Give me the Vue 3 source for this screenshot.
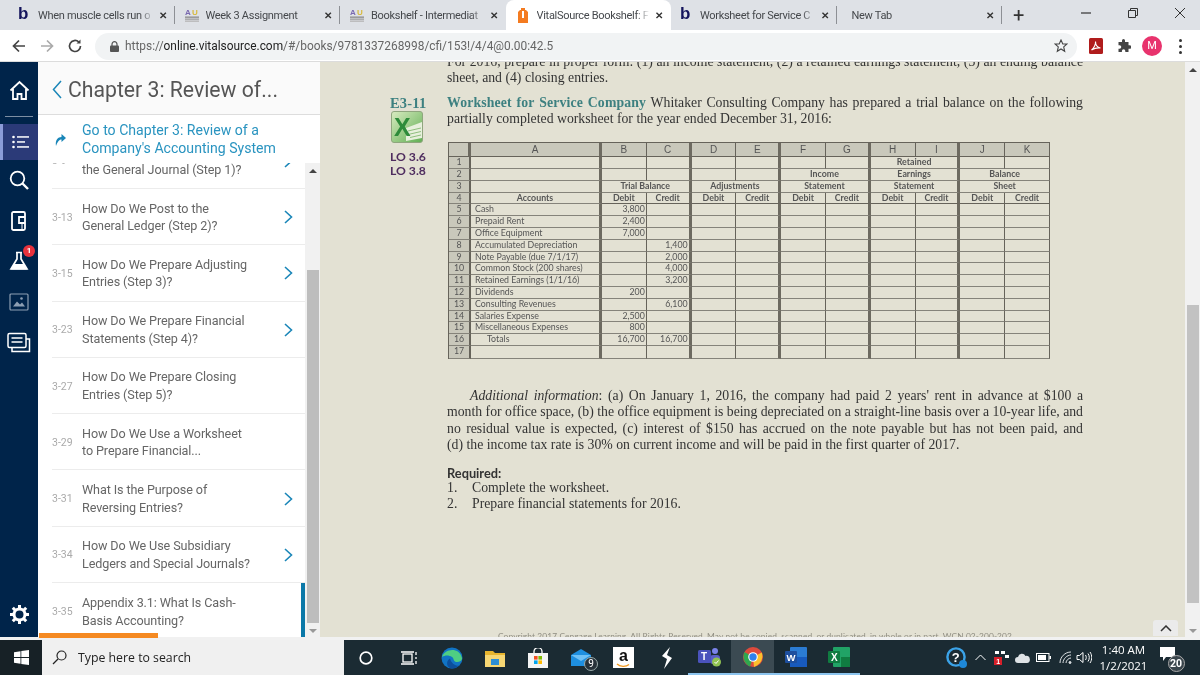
<template>
  <div class="page">
    <!-- browser tabs -->
    <div class="tabs">
      <div v-for="tab in tabs" :key="tab.title" class="tab" :class="{ active: tab.active, sep: tab.sep }">
        <span v-if="tab.icon === 'b'" class="fav-b">b</span>
        <svg v-else-if="tab.icon === 'au'" class="fav" viewBox="0 0 16 16">
          <text x="1" y="8" font-size="8" font-weight="700" font-family="Liberation Sans" fill="#7a6ab0">A</text>
          <text x="8" y="8" font-size="8" font-weight="700" font-family="Liberation Sans" fill="#d8b93c">U</text>
          <rect x="1" y="9.5" width="14" height="1.3" fill="#8a8a8a" />
          <rect x="1" y="11.5" width="14" height="1.3" fill="#a0a0a0" />
          <rect x="1" y="13.5" width="14" height="1.3" fill="#b5b5b5" />
        </svg>
        <svg v-else-if="tab.icon === 'vs'" class="fav" viewBox="0 0 16 16">
          <path d="M3 5l2-2h1V1h4v2h1l2 2v11H3z" fill="#f47b20" />
          <path d="M7 4h2v7H7z" fill="#fff" />
        </svg>
        <span class="tab-title">{{ tab.title }}</span>
        <span class="tab-x">✕</span>
      </div>
      <span class="tab-plus">+</span>
      <div class="win-ctrl">
        <svg width="12" height="12" viewBox="0 0 12 12"><path d="M1 6h10" stroke="#333" stroke-width="1.2" /></svg>
        <svg width="12" height="12" viewBox="0 0 12 12" fill="none" stroke="#333"><path d="M1.5 3.5h7v7h-7zM3.5 3.5v-2h7v7h-2" /></svg>
        <svg width="12" height="12" viewBox="0 0 12 12"><path d="M1 1l10 10M11 1L1 11" stroke="#333" /></svg>
      </div>
    </div>

    <!-- address bar -->
    <div class="toolbar">
      <svg class="nav-btn" width="16" height="16" viewBox="0 0 16 16" fill="none" stroke="#444" stroke-width="1.7"><path d="M14 8H2.5M8 2.5L2.5 8 8 13.5" /></svg>
      <svg class="nav-btn" width="16" height="16" viewBox="0 0 16 16" fill="none" stroke="#aaa" stroke-width="1.7"><path d="M2 8h11.5M8 2.5L13.5 8 8 13.5" /></svg>
      <svg class="nav-btn" width="16" height="16" viewBox="0 0 16 16" fill="none" stroke="#444" stroke-width="1.7"><path d="M13.5 8a5.5 5.5 0 1 1-1.7-4" /><path d="M13.5 1.5v4h-4" fill="#444" stroke="none" /></svg>
      <div class="omnibox">
        <svg width="9" height="11" viewBox="0 0 9 11"><path d="M2 5V3.2a2.5 2.5 0 0 1 5 0V5" fill="none" stroke="#555" stroke-width="1.2" /><rect y="4.5" width="9" height="6.5" rx="1" fill="#555" /></svg>
        <span class="url">https://<b>online.vitalsource.com</b>/#/books/9781337268998/cfi/153!/4/4@0.00:42.5</span>
        <svg class="star" width="14" height="14" viewBox="0 0 14 14"><path d="M7 1l1.8 4h4.2l-3.3 2.9 1 4.4L7 10l-3.700 2.300 1-4.400L1 5h4.200z" fill="none" stroke="#444" stroke-width="1.100" /></svg>
      </div>
      <div class="ext">
        <svg width="14" height="16" viewBox="0 0 14 16"><rect width="14" height="16" rx="1.500" fill="#b01c1c" /><path d="M2.500 12C5 10 7 6 6.500 3.500 6.500 7 8.500 9.500 11.500 10 8 9.500 5 10.500 2.500 12z" fill="none" stroke="#fff" stroke-width="1.100" /></svg>
        <svg width="14" height="14" viewBox="0 0 14 14"><path d="M5 1.500a1.500 1.500 0 0 1 3 0V3h3.500v3.200h1a1.700 1.700 0 0 1 0 3.600h-1V13H8.300v-1a1.700 1.700 0 0 0-3.400 0v1H1.500V9.800h1a1.700 1.700 0 0 0 0-3.600h-1V3H5z" fill="#444" /></svg>
        <span class="avatar">M</span>
        <span class="dots"><i></i><i></i><i></i></span>
      </div>
    </div>

    <div class="main">
      <!-- icon rail -->
      <aside class="rail">
        <svg class="rail-home" width="21" height="21" viewBox="0 0 21 21" fill="none" stroke="#fff" stroke-width="1.800"><path d="M1.500 10.500L10.500 2l9 8.500M4 9v10h4.500v-5h4v5H17V9" /></svg>
        <div class="rail-line"></div>
        <div class="rail-item on">
          <svg width="18" height="14" viewBox="0 0 18 14" fill="#fff"><circle cx="1.500" cy="2" r="1.300" /><circle cx="1.500" cy="7" r="1.300" /><circle cx="1.500" cy="12" r="1.300" /><rect x="5" y="1.200" width="12" height="1.500" /><rect x="5" y="6.200" width="8" height="1.500" /><rect x="5" y="11.200" width="12" height="1.500" /></svg>
        </div>
        <div class="rail-item">
          <svg width="20" height="20" viewBox="0 0 20 20" fill="none" stroke="#fff" stroke-width="1.800"><circle cx="8.500" cy="8.500" r="6.800" /><path d="M13.500 13.500L19 19" stroke-width="2.400" /></svg>
        </div>
        <div class="rail-item">
          <svg width="16" height="20" viewBox="0 0 16 20" fill="none" stroke="#fff" stroke-width="1.800"><rect x="1" y="1" width="13" height="18" rx="1.500" /><path d="M14 6H8v6h6" /><path d="M11 12v7" stroke-width="1" /></svg>
        </div>
        <div class="rail-item flask">
          <svg width="20" height="20" viewBox="0 0 20 20"><path d="M7 1.500h6M8 2v6L2 18h16l-6-10V2" fill="none" stroke="#fff" stroke-width="1.700" /><path d="M5 13h10l3 5.500H2z" fill="#fff" /></svg>
          <span class="badge">1</span>
        </div>
        <div class="rail-item">
          <svg width="20" height="18" viewBox="0 0 20 18" fill="none" stroke="#8d9fb3" stroke-width="1.200"><rect x="1" y="1" width="18" height="16" rx="1" /><path d="M4 13.500l4-5 3 3 2-2 3 4z" fill="#8d9fb3" stroke="none" /><circle cx="12.500" cy="5.500" r="1.300" fill="#8d9fb3" stroke="none" /></svg>
        </div>
        <div class="rail-item">
          <svg width="24" height="21" viewBox="0 0 24 21" fill="none" stroke="#fff" stroke-width="1.500"><path d="M5 15v4.500h17.500V7H19" /><rect x="1" y="1.500" width="18" height="14" rx="1.500" fill="#00244a" /><path d="M4.500 6h11M4.500 10h11" /></svg>
        </div>
        <svg class="rail-gear" width="21" height="21" viewBox="0 0 21 21"><circle cx="10.500" cy="10.500" r="5.500" fill="none" stroke="#fff" stroke-width="3" /><path d="M10.500 1v4M10.500 16v4M1 10.500h4M16 10.500h4M3.800 3.800l2.800 2.800M14.400 14.400l2.800 2.800M17.200 3.800l-2.800 2.800M6.600 14.400l-2.800 2.800" stroke="#fff" stroke-width="3" /></svg>
      </aside>

      <!-- chapter navigation -->
      <section class="nav">
        <header class="nav-head">
          <svg width="10" height="19" viewBox="0 0 10 19" fill="none" stroke="#1a86b8" stroke-width="1.500"><path d="M9 1L1.500 9.500 9 18" /></svg>
          <span>Chapter 3: Review of...</span>
        </header>
        <div class="goto">
          <svg width="11" height="13" viewBox="0 0 11 13"><path d="M1 13C0 7 3 4 6.500 4V1L11 5 6.500 9V6.500C4 6.500 2.500 9 1 13z" fill="#1a86b8" /></svg>
          <span>Go to Chapter 3: Review of a Company's Accounting System</span>
        </div>
        <div class="nav-body">
          <div class="nav-list">
            <div v-for="item in sections" :key="item.page" class="row" :class="{ current: item.current }">
              <span class="row-page">{{ item.page }}</span>
              <span class="row-title">
                <span v-for="line in item.lines" :key="line" class="line">{{ line }}</span>
              </span>
              <svg v-if="item.more" width="9" height="14" viewBox="0 0 9 14" fill="none" stroke="#1a86b8" stroke-width="1.600"><path d="M1 1l6.500 6L1 13" /></svg>
            </div>
          </div>
          <div class="nav-scroll">
            <span class="arrow up"></span>
            <div class="nav-thumb"></div>
            <span class="arrow down"></span>
          </div>
        </div>
        <div class="progress"></div>
      </section>

      <!-- book page -->
      <section class="book">
        <div class="book-page">
          <div class="clip-top">
            <p class="just">For 2016, prepare in proper form: (1) an income statement, (2) a retained earnings statement, (3) an ending balance</p>
            <p>sheet, and (4) closing entries.</p>
          </div>
          <div class="exercise">
            <div class="labels">
              <div class="ex-no">E3-11</div>
              <svg class="xl" width="32" height="32" viewBox="0 0 32 32">
                <defs><linearGradient id="xlg" x1="0" y1="0" x2="1" y2="1"><stop offset="0" stop-color="#d8ebc0" /><stop offset="1" stop-color="#5fae52" /></linearGradient></defs>
                <rect x=".5" y=".5" width="31" height="31" rx="2.500" fill="url(#xlg)" stroke="#8fa67e" />
                <path d="M15 17l16-6v16l-16 3z" fill="#e7f0dc" />
                <path d="M17 20l13-3M17 23.500l13-3M19 26.500l11-2.500" stroke="#8fbf7e" />
                <text x="3" y="25" font-size="25" font-weight="700" font-family="Liberation Sans" fill="#2e8b3a">X</text>
              </svg>
              <div class="lo">LO 3.6<br />LO 3.8</div>
            </div>
            <div class="ex-body">
              <p class="just"><b class="ex-title">Worksheet for Service Company</b> Whitaker Consulting Company has prepared a trial balance on the following</p>
              <p>partially completed worksheet for the year ended December 31, 2016:</p>

              <div class="sheet">
                <template v-for="(row, r) in sheetRows" :key="r">
                  <div
                    v-for="(cell, c) in row"
                    :key="c"
                    class="cell"
                    :class="cell.cls"
                    :style="{ gridColumn: 'span ' + cell.span }"
                  >{{ cell.text }}</div>
                </template>
              </div>

              <div class="info">
                <p class="just indent"><i>Additional information</i>: (a) On January 1, 2016, the company had paid 2 years' rent in advance at $100 a</p>
                <p class="just">month for office space, (b) the office equipment is being depreciated on a straight-line basis over a 10-year life, and</p>
                <p class="just">no residual value is expected, (c) interest of $150 has accrued on the note payable but has not been paid, and</p>
                <p>(d) the income tax rate is 30% on current income and will be paid in the first quarter of 2017.</p>
              </div>
              <div class="req-head">Required:</div>
              <div class="req"><span>1.</span>Complete the worksheet.</div>
              <div class="req"><span>2.</span>Prepare financial statements for 2016.</div>
              <div class="copyright">Copyright 2017 Cengage Learning. All Rights Reserved. May not be copied, scanned, or duplicated, in whole or in part. WCN 02-200-202</div>
            </div>
          </div>
          <div class="to-top">
            <svg width="12" height="7" viewBox="0 0 12 7" fill="none" stroke="#333" stroke-width="1.500"><path d="M1 6l5-5 5 5" /></svg>
          </div>
        </div>
        <div class="page-scroll">
          <span class="arrow up"></span>
          <div class="page-thumb"></div>
          <span class="arrow down"></span>
        </div>
      </section>
    </div>
    <div class="strip"></div>

    <!-- windows taskbar -->
    <footer class="taskbar">
      <div class="start">
        <svg width="15" height="15" viewBox="0 0 15 15" fill="#fff"><path d="M0 2.200l6.500-1V7H0zM7.300 1l7.700-1v7H7.300zM0 8h6.500v5.800l-6.500-1zM7.300 8H15v7l-7.700-1.100z" /></svg>
      </div>
      <div class="search">
        <svg width="15" height="15" viewBox="0 0 15 15" fill="none" stroke="#222" stroke-width="1.200"><circle cx="9.500" cy="5.500" r="4.500" /><path d="M6 9l-5 5" /></svg>
        <span>Type here to search</span>
      </div>
      <div class="apps">
        <div class="app">
          <svg width="14" height="14" viewBox="0 0 14 14" fill="none" stroke="#fff" stroke-width="1.700"><circle cx="7" cy="7" r="5.800" /></svg>
        </div>
        <div class="app">
          <svg width="16" height="14" viewBox="0 0 16 14" fill="none" stroke="#fff" stroke-width="1.300"><rect x="2" y="3" width="9" height="8" /><path d="M0 1h13M0 13h13M15 1v3M15 6v2M15 10v3" /></svg>
        </div>
        <div class="app">
          <svg width="22" height="22" viewBox="0 0 22 22">
            <circle cx="11" cy="11" r="10.500" fill="#1174c4" />
            <path d="M1 10C3 2 18 -1 21 11c.5 3-3 4.500-6 4-3-1-2-4-4-5-3-2-7-2-10 0z" fill="#4fce82" />
            <path d="M11 21.500c-5 0-7-7-2-10 1 4 5 8 9 7-2 2-4 3-7 3z" fill="#0c4f9c" />
          </svg>
        </div>
        <div class="app">
          <svg width="20" height="18" viewBox="0 0 20 18"><path d="M0 2h8l2 2h10v14H0z" fill="#e8b52e" /><rect y="6" width="20" height="12" fill="#f7d774" /><rect x="6" y="10" width="8" height="6" fill="#2d8fd5" /></svg>
        </div>
        <div class="app">
          <svg width="20" height="20" viewBox="0 0 20 20"><path d="M6 6V3.500a4 4 0 0 1 8 0V6" fill="none" stroke="#fff" stroke-width="1.300" /><rect y="5" width="20" height="15" fill="#f4f4f4" /><rect x="6" y="8" width="3.600" height="3.600" fill="#f25022" /><rect x="10.400" y="8" width="3.600" height="3.600" fill="#7fba00" /><rect x="6" y="12.400" width="3.600" height="3.600" fill="#00a4ef" /><rect x="10.400" y="12.400" width="3.600" height="3.600" fill="#ffb900" /></svg>
        </div>
        <div class="app">
          <svg width="22" height="20" viewBox="0 0 22 20"><path d="M1 7l10-6 10 6v11H1z" fill="#1e8fe0" /><path d="M1 7l10 6 10-6" fill="#6fc0f5" /></svg>
          <span class="mail-count">9</span>
        </div>
        <div class="app">
          <div class="amazon">a<svg width="15" height="5" viewBox="0 0 15 5" fill="none" stroke="#f29a1f" stroke-width="1.300"><path d="M1 1c3 3 9 3 12 .5" /></svg></div>
        </div>
        <div class="app">
          <svg width="12" height="22" viewBox="0 0 12 22" fill="#fff"><path d="M9 0L1 9l5 3-3 10 8-11-5-3z" /></svg>
        </div>
        <div class="app open">
          <svg width="24" height="20" viewBox="0 0 24 20">
            <circle cx="17" cy="4" r="3" fill="#7b83eb" /><rect x="12" y="8" width="10" height="9" rx="3" fill="#5b5fc7" />
            <rect y="3" width="13" height="13" rx="1.500" fill="#4b53bc" />
            <text x="3" y="13" font-size="10" font-weight="700" font-family="Liberation Sans" fill="#fff">T</text>
            <circle cx="18.500" cy="15" r="4.500" fill="#92c353" /><path d="M16.500 15l1.500 1.500 2.500-3" fill="none" stroke="#fff" />
          </svg>
        </div>
        <div class="app open lit">
          <svg width="20" height="20" viewBox="0 0 20 20">
            <circle cx="10" cy="10" r="10" fill="#de4a3c" />
            <path d="M10 10L1.500 5C-1 10 1 17 7 19.500z" fill="#2fa84f" />
            <path d="M10 10l8.800-4.500C20.500 10 19 17 11 20z" fill="#fbc02d" />
            <circle cx="10" cy="10" r="4.800" fill="#fff" /><circle cx="10" cy="10" r="3.700" fill="#2f80ed" />
          </svg>
        </div>
        <div class="app open">
          <svg width="22" height="20" viewBox="0 0 22 20"><rect x="5" width="17" height="20" rx="1" fill="#2b7cd3" /><rect x="5" y="10" width="17" height="10" fill="#185abd" /><rect y="4" width="12" height="12" rx="1" fill="#1e4f9e" /><text x="1.500" y="13.500" font-size="9.500" font-weight="700" font-family="Liberation Sans" fill="#fff">W</text></svg>
        </div>
        <div class="app open">
          <svg width="22" height="20" viewBox="0 0 22 20"><rect x="5" width="17" height="20" rx="1" fill="#21a366" /><rect x="13" y="10" width="9" height="10" fill="#107c41" /><rect y="4" width="12" height="12" rx="1" fill="#107c41" /><text x="3" y="13.500" font-size="10" font-weight="700" font-family="Liberation Sans" fill="#fff">X</text></svg>
        </div>
      </div>
      <div class="tray">
        <svg class="help" width="21" height="21" viewBox="0 0 21 21"><circle cx="10" cy="10" r="8.600" fill="none" stroke="#3ba3e8" stroke-width="2.400" /><text x="5.800" y="15" font-size="13" font-weight="700" font-family="Liberation Sans" fill="#fff">?</text><circle cx="17" cy="17" r="4" fill="#1e88d8" /></svg>
        <svg class="t-up" width="11" height="7" viewBox="0 0 11 7" fill="none" stroke="#fff"><path d="M.5 6l5-5 5 5" /></svg>
        <svg class="t-net" width="15" height="15" viewBox="0 0 15 15"><rect x="1" y="1" width="4" height="3" fill="#fff" /><rect x="7" y="1" width="4" height="3" fill="#fff" /><rect x="11" y="5" width="4" height="3" fill="#fff" /><rect y="7" width="8" height="8" fill="#d81f2a" /><text x="2.200" y="14" font-size="7" font-weight="700" font-family="Liberation Sans" fill="#fff">1</text></svg>
        <svg class="t-cloud" width="15" height="10" viewBox="0 0 15 10"><path d="M3 10a3 3 0 0 1 0-6 4 4 0 0 1 7.500-1A3.500 3.500 0 0 1 12 10z" fill="#dfe3e6" /></svg>
        <svg class="t-bat" width="15" height="9" viewBox="0 0 15 9"><rect x=".5" y=".5" width="12.500" height="8" fill="none" stroke="#fff" /><rect x="2" y="2" width="8" height="5" fill="#fff" /><rect x="13.500" y="3" width="1.500" height="3" fill="#fff" /></svg>
        <svg class="t-wifi" width="13" height="13" viewBox="0 0 13 13" fill="none" stroke="#dfe3e6"><path d="M1 12C1 6 6 1 12 1M4 12c0-4 4-8 8-8M7 12c0-2.500 2.500-5 5-5" /><circle cx="11" cy="11.500" r="1" fill="#dfe3e6" /></svg>
        <svg class="t-vol" width="16" height="13" viewBox="0 0 16 13" fill="none" stroke="#fff"><path d="M1 4.500h2.500L7 1.500v10l-3.500-3H1zM9.500 4c1 1.500 1 3.500 0 5M12 2.500c1.700 2.500 1.700 5.500 0 8M14 1c2.300 3.300 2.300 7.700 0 11" /></svg>
        <div class="clock"><div>1:40 AM</div><div>1/2/2021</div></div>
        <div class="notif">
          <svg width="15" height="14" viewBox="0 0 15 14"><path d="M0 0h15v10H6l-3 4v-4H0z" fill="#fff" /></svg>
          <span>20</span>
        </div>
      </div>
    </footer>
  </div>
</template>

<script setup>
const tabs = [
  { title: 'When muscle cells run o', icon: 'b', sep: true },
  { title: 'Week 3 Assignment', icon: 'au', sep: true },
  { title: 'Bookshelf - Intermediat', icon: 'au' },
  { title: 'VitalSource Bookshelf: F', icon: 'vs', active: true },
  { title: 'Worksheet for Service C', icon: 'b', sep: true },
  { title: 'New Tab', sep: true }
]

const sections = [
  { page: '3-9', lines: ['', 'the General Journal (Step 1)?'], more: true },
  { page: '3-13', lines: ['How Do We Post to the', 'General Ledger (Step 2)?'], more: true },
  { page: '3-15', lines: ['How Do We Prepare Adjusting', 'Entries (Step 3)?'], more: true },
  { page: '3-23', lines: ['How Do We Prepare Financial', 'Statements (Step 4)?'], more: true },
  { page: '3-27', lines: ['How Do We Prepare Closing', 'Entries (Step 5)?'] },
  { page: '3-29', lines: ['How Do We Use a Worksheet', 'to Prepare Financial...'] },
  { page: '3-31', lines: ['What Is the Purpose of', 'Reversing Entries?'], more: true },
  { page: '3-34', lines: ['How Do We Use Subsidiary', 'Ledgers and Special Journals?'], more: true },
  { page: '3-35', lines: ['Appendix 3.1: What Is Cash-', 'Basis Accounting?'], current: true }
]

const accounts = [
  ['Cash', '3,800', ''],
  ['Prepaid Rent', '2,400', ''],
  ['Office Equipment', '7,000', ''],
  ['Accumulated Depreciation', '', '1,400'],
  ['Note Payable (due 7/1/17)', '', '2,000'],
  ['Common Stock (200 shares)', '', '4,000'],
  ['Retained Earnings (1/1/16)', '', '3,200'],
  ['Dividends', '200', ''],
  ['Consulting Revenues', '', '6,100'],
  ['Salaries Expense', '2,500', ''],
  ['Miscellaneous Expenses', '800', ''],
  ['Totals', '16,700', '16,700'],
  ['', '', '']
]

const cell = (text, span, cls) => ({ text, span, cls })
const thickCols = 'ACEGI'
const blanks = (letters) =>
  letters.split('').map((l) => cell('', 1, thickCols.includes(l) ? 'thick' : ''))
const pair = (text, thick = true) => cell(text, 2, 'head' + (thick ? ' thick' : ''))
const num = (n) => cell(n, 1, 'rownum')

const sheetRows = [
  [cell('', 1, 'letter thick'), ...'ABCDEFGHIJK'.split('').map((l) =>
    cell(l, 1, 'letter' + (thickCols.includes(l) ? ' thick' : '')))],
  [num(1), ...blanks('ABCDEFG'), pair('Retained'), ...blanks('JK')],
  [num(2), ...blanks('ABCDE'), pair('Income'), pair('Earnings'), pair('Balance', false)],
  [num(3), ...blanks('A'), pair('Trial Balance'), pair('Adjustments'), pair('Statement'), pair('Statement'), pair('Sheet', false)],
  [num(4), cell('Accounts', 1, 'head thick'), ...'BCDEFGHIJK'.split('').map((l, i) =>
    cell(i % 2 ? 'Credit' : 'Debit', 1, 'head under' + (thickCols.includes(l) ? ' thick' : '')))],
  ...accounts.map((a, i) => [
    num(i + 5),
    cell(a[0], 1, 'account thick' + (a[0] === 'Totals' ? ' totals' : '')),
    cell(a[1], 1, 'amount'),
    cell(a[2], 1, 'amount thick'),
    ...blanks('DEFGHIJK')
  ])
]
</script>

<style scoped>
.page {
  width: 1200px;
  height: 675px;
  overflow: hidden;
  display: flex;
  flex-direction: column;
  background: #fff;
  font-family: Roboto, "Liberation Sans", sans-serif;
  filter: blur(0.45px);
}

/* tabs */
.tabs {
  height: 30px;
  flex: none;
  display: flex;
  align-items: center;
  padding-left: 9px;
  background: #dee1e6;
  font-size: 11px;
  letter-spacing: -0.3px;
  color: #45484c;
}
.tab {
  width: 165.500px;
  height: 100%;
  flex: none;
  display: flex;
  align-items: center;
  padding: 0 8px 0 9px;
  box-sizing: border-box;
  position: relative;
}
.tab.sep::after {
  content: "";
  position: absolute;
  right: 0;
  top: 6px;
  bottom: 6px;
  width: 1px;
  background: #8d9095;
}
.tab.active {
  background: #fff;
  border-radius: 8px 8px 0 0;
}
.fav-b {
  width: 14px;
  font: 700 17px/1 "Liberation Sans", sans-serif;
  color: #14145c;
  margin-top: -3px;
}
.fav {
  width: 16px;
  height: 16px;
  flex: none;
}
.tab-title {
  flex: 1;
  min-width: 0;
  margin-left: 6px;
  white-space: nowrap;
  overflow: hidden;
  -webkit-mask-image: linear-gradient(90deg, #000 88%, transparent);
  mask-image: linear-gradient(90deg, #000 88%, transparent);
}
.tab-x {
  font-size: 9.500px;
  font-weight: 700;
  color: #333;
  margin-left: 5px;
}
.tab-plus {
  margin-left: 11px;
  font-size: 20px;
  line-height: 1;
  color: #333;
}
.win-ctrl {
  margin-left: auto;
  width: 106px;
  padding-right: 14px;
  display: flex;
  justify-content: space-between;
  margin-top: -4px;
}

/* toolbar */
.toolbar {
  height: 32px;
  flex: none;
  display: flex;
  align-items: center;
  padding-left: 11px;
  background: #fff;
  box-shadow: inset 0 -1px 0 #dcdcdc;
}
.nav-btn {
  margin-right: 12px;
}
.omnibox {
  width: 982px;
  margin-left: 0;
  height: 27px;
  border-radius: 14px;
  background: #f1f3f4;
  display: flex;
  align-items: center;
  padding: 0 9px 0 15px;
  box-sizing: border-box;
}
.url {
  margin-left: 6px;
  font-size: 11.900px;
  color: #666;
  white-space: nowrap;
}
.url b {
  font-weight: 400;
  color: #222;
}
.star {
  margin-left: auto;
}
.ext {
  flex: 1;
  display: flex;
  align-items: center;
  padding-left: 12px;
}
.ext svg + svg {
  margin-left: 14px;
}
.avatar {
  width: 20px;
  height: 20px;
  margin-left: 11px;
  border-radius: 50%;
  background: #e8336d;
  color: #fff;
  font-size: 11px;
  line-height: 20px;
  text-align: center;
}
.dots {
  margin-left: 17px;
  display: flex;
  flex-direction: column;
  gap: 3px;
}
.dots i {
  width: 3px;
  height: 3px;
  border-radius: 50%;
  background: #333;
}

/* layout */
.main {
  height: 575px;
  flex: none;
  display: flex;
}
.strip {
  height: 3px;
  flex: none;
  background: #f1f1f1;
}

/* rail */
.rail {
  width: 38px;
  flex: none;
  display: flex;
  flex-direction: column;
  align-items: center;
  background: #00244a;
  padding-top: 18px;
  box-sizing: border-box;
}
.rail-home {
  flex: none;
}
.rail-line {
  width: 28px;
  height: 1px;
  margin-top: 15px;
  background: #7d8ea3;
}
.rail-item {
  width: 100%;
  height: 40.500px;
  flex: none;
  display: flex;
  align-items: center;
  justify-content: center;
  position: relative;
}
.rail-item.on {
  height: 36px;
  margin-top: 7px;
  background: #2b3a78;
  border-left: 3px solid #8c9bd8;
  box-sizing: border-box;
}
.badge {
  position: absolute;
  top: 4px;
  left: 23px;
  width: 12px;
  height: 12px;
  border-radius: 50%;
  background: #e8323c;
  color: #fff;
  font-size: 8px;
  font-weight: 700;
  line-height: 12px;
  text-align: center;
}
.rail-gear {
  margin-top: auto;
  margin-bottom: 12px;
  flex: none;
}

/* nav */
.nav {
  width: 282px;
  flex: none;
  display: flex;
  flex-direction: column;
  position: relative;
  background: #fff;
}
.nav-head {
  height: 53px;
  flex: none;
  display: flex;
  align-items: center;
  gap: 6px;
  padding: 3px 0 0 14px;
  background: #fafafa;
  border-bottom: 1px solid #ddd;
  box-sizing: border-box;
  font-size: 21.200px;
  color: #555;
}
.goto {
  height: 48px;
  flex: none;
  display: flex;
  align-items: center;
  position: relative;
  z-index: 1;
  background: #fff;
  font-size: 14.100px;
  line-height: 18px;
  color: #2a94c0;
  padding: 0 20px 0 17px;
  gap: 16px;
}
.goto span {
  width: 210px;
}
.nav-body {
  flex: 1;
  min-height: 0;
  display: flex;
}
.nav-list {
  flex: 1;
  overflow: hidden;
}
.row {
  height: 56.300px;
  margin-left: 14px;
  padding-top: 1px;
  display: grid;
  grid-template-columns: 30px 202px 9px;
  align-items: center;
  box-sizing: border-box;
  border-bottom: 1.500px solid #ececec;
}
.row:first-child {
  margin-top: -30.300px;
}
.row:last-child {
  border-bottom: none;
  border-right: 4px solid #0b78a8;
}
.row-page {
  font-size: 10.500px;
  color: #aaa;
}
.row-title {
  font-size: 12.600px;
  letter-spacing: -0.1px;
  color: #666;
}
.line {
  display: block;
  height: 17.600px;
  line-height: 17.600px;
  white-space: nowrap;
}
.nav-scroll {
  width: 15px;
  flex: none;
  background: #f1f1f1;
  display: flex;
  flex-direction: column;
  align-items: center;
  position: relative;
}
.nav-thumb {
  width: 12px;
  height: 353px;
  margin-top: 107px;
  background: #bdbdbd;
}
.arrow {
  position: absolute;
  width: 0;
  height: 0;
  border-left: 4px solid transparent;
  border-right: 4px solid transparent;
}
.arrow.up {
  top: 6px;
  border-bottom: 4px solid #444;
}
.arrow.down {
  bottom: 4px;
  border-top: 4px solid #999;
}
.progress {
  position: absolute;
  left: 1px;
  bottom: -1px;
  width: 119px;
  height: 5px;
  background: #f58a22;
}

/* book */
.book {
  flex: 1;
  min-width: 0;
  display: flex;
  background: #e3e1d3;
}
.book-page {
  flex: 1;
  min-width: 0;
  overflow: hidden;
  position: relative;
  padding-right: 102px;
  font-family: "Liberation Serif", serif;
  font-size: 13.750px;
  line-height: 16.300px;
  color: #333;
}
.book-page p {
  margin: 0;
}
.just {
  text-align: justify;
  text-align-last: justify;
}
.clip-top {
  margin: -8px 0 0 127px;
}
.exercise {
  display: flex;
  margin-top: 8px;
}
.labels {
  width: 127px;
  flex: none;
  padding-left: 70px;
  box-sizing: border-box;
}
.ex-no {
  font-weight: 700;
  color: #3d8080;
  font-size: 14.500px;
  letter-spacing: 0.2px;
}
.xl {
  display: block;
  margin: 0 0 0 1px;
}
.lo {
  margin-top: 7px;
  font-family: Lato, "Liberation Sans", sans-serif;
  font-weight: 700;
  font-size: 12.200px;
  line-height: 14px;
  color: #4f2d5f;
}
.ex-body {
  flex: 1;
  min-width: 0;
}
.ex-title {
  color: #3d8080;
  letter-spacing: 0.15px;
}

/* worksheet grid */
.sheet {
  display: grid;
  grid-template-columns: 22px 131px repeat(10, 44.800px);
  grid-template-rows: 14px repeat(16, 11.800px) 13px;
  width: 601px;
  margin: 15px 0 0 1px;
  border-top: 1.500px solid #66635a;
  border-left: 1.500px solid #66635a;
  font-family: Lato, "Open Sans", sans-serif;
  font-size: 8.800px;
  line-height: 10px;
  color: #555;
}
.cell {
  min-width: 0;
  border-right: 1px solid #66635a;
  border-bottom: 1.500px solid #85837a;
  box-sizing: border-box;
  overflow: hidden;
  white-space: nowrap;
}
.cell.thick {
  border-right: 3px solid #6d6a60;
}
.letter {
  background: #c9c8bb;
  text-align: center;
  font-size: 10px;
  line-height: 13px;
  font-family: "Liberation Sans", sans-serif;
  border-bottom: 1.500px solid #66635a;
}
.rownum {
  background: #c9c8bb;
  text-align: center;
  border-right: 2px solid #66635a;
}
.head {
  font-weight: 700;
  text-align: center;
}
.under {
  border-bottom: 1.500px solid #66635a;
}
.account {
  padding-left: 4px;
}
.totals {
  padding-left: 16px;
}
.amount {
  text-align: right;
  padding-right: 1px;
}

.info {
  margin-top: 29px;
}
.indent {
  text-indent: 23px;
}
.req-head {
  margin-top: 14px;
  font-family: Lato, "Liberation Sans", sans-serif;
  font-weight: 700;
  font-size: 12.800px;
  line-height: 13px;
  color: #333;
}
.req {
  display: flex;
}
.req span {
  width: 25px;
}
.copyright {
  position: absolute;
  left: 178px;
  top: 569px;
  white-space: nowrap;
  font-family: Lato, "Liberation Sans", sans-serif;
  font-size: 8.400px;
  line-height: 10px;
  color: #8f8d82;
  letter-spacing: 0.1px;
}
.to-top {
  position: absolute;
  right: 7px;
  bottom: 1px;
  width: 25px;
  height: 16px;
  display: flex;
  align-items: center;
  justify-content: center;
  border-radius: 3px 3px 0 0;
  background: #ebebeb;
}
.page-scroll {
  width: 15px;
  flex: none;
  background: #f1f1f1;
  position: relative;
  display: flex;
  justify-content: center;
}
.page-thumb {
  width: 12px;
  height: 298px;
  margin-top: 243px;
  background: #c2c2c2;
}

/* taskbar */
.taskbar {
  height: 35px;
  flex: none;
  display: flex;
  background: #1b2b33;
  color: #fff;
}
.start {
  width: 42px;
  display: flex;
  align-items: center;
  justify-content: center;
  background: #172126;
}
.search {
  width: 302px;
  display: flex;
  align-items: center;
  gap: 11px;
  padding-left: 10px;
  box-sizing: border-box;
  background: #f0f0f0;
  color: #222;
  font-size: 12.300px;
  font-family: "Open Sans", sans-serif;
}
.apps {
  display: flex;
}
.app {
  width: 43px;
  height: 35px;
  flex: none;
  display: flex;
  align-items: center;
  justify-content: center;
  position: relative;
  box-sizing: border-box;
}
.app.open {
  border-bottom: 2px solid #8cc4ee;
}
.app.lit {
  background: #3b4a52;
}
.mail-count {
  position: absolute;
  right: 4px;
  bottom: 4px;
  width: 14px;
  height: 14px;
  border-radius: 50%;
  background: #27323a;
  border: 1px solid #9aa;
  box-sizing: border-box;
  font-size: 10px;
  line-height: 12px;
  text-align: center;
}
.amazon {
  width: 21px;
  height: 21px;
  background: #fff;
  color: #111;
  position: relative;
  text-align: center;
  font: 700 16px/17px "Liberation Sans", sans-serif;
}
.amazon svg {
  position: absolute;
  left: 3px;
  bottom: 0;
}
.tray {
  flex: 1;
  display: flex;
  align-items: center;
  padding-left: 86px;
}
.t-up {
  margin-left: 8px;
}
.t-net {
  margin-left: 8px;
}
.t-cloud {
  margin-left: 6px;
}
.t-bat {
  margin-left: 6px;
}
.t-wifi {
  margin-left: 8px;
}
.t-vol {
  margin-left: 3.500px;
}
.clock {
  width: 60px;
  margin-left: 2px;
  text-align: center;
  font-family: "Open Sans", sans-serif;
  font-size: 11.500px;
  line-height: 16px;
}
.notif {
  margin-left: 6px;
  position: relative;
  width: 24px;
  height: 24px;
}
.notif span {
  position: absolute;
  right: -1px;
  bottom: -2px;
  width: 17px;
  height: 17px;
  border-radius: 50%;
  background: #3a454c;
  border: 1px solid #aaa;
  box-sizing: border-box;
  font-size: 10.500px;
  font-weight: 700;
  line-height: 15px;
  text-align: center;
}
</style>

<style>
html,
body {
  margin: 0;
  background: #fff;
}
</style>
